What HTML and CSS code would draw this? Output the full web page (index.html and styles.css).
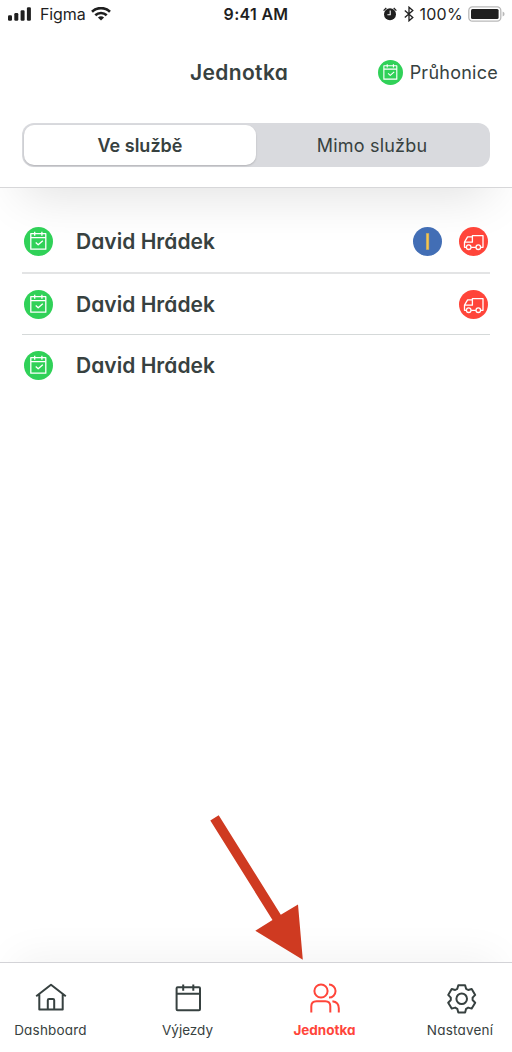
FILE: index.html
```html
<!DOCTYPE html>
<html lang="cs">
<head>
<meta charset="utf-8">
<title>Jednotka</title>
<link rel="stylesheet" href="styles.css">
</head>
<body>
<svg class="symbols" width="0" height="0">
  <symbol id="duty" viewBox="0 0 29 29">
    <circle cx="14.5" cy="14.5" r="14.5" fill="#30d158"/>
    <g fill="none" stroke="#fff" stroke-width="1.3" stroke-linejoin="round">
      <rect x="6.8" y="6.7" width="15" height="15.5"/>
      <path d="M6.8 10.6h15M10.7 4.8v4M17.9 4.8v4M11.7 15.6l2.5 2.2 4.6-4.1"/>
    </g>
  </symbol>
  <symbol id="truck" viewBox="0 0 29 29">
    <circle cx="14.5" cy="14.5" r="14.5" fill="#ff453a"/>
    <g fill="none" stroke="#fff" stroke-width="1.3" stroke-linejoin="round">
      <path d="M7.3 20.3H5.5V15.2L8.6 9.9H13.4V8.6H24v11.7h-2.3M16.9 20.3h-4.8M5.5 15.2h7.9V9.9"/>
      <circle cx="9.7" cy="20.2" r="2.3"/><circle cx="19.3" cy="20.2" r="2.3"/>
    </g>
  </symbol>
</svg>
<div class="screen">
  <header class="header">
    <div class="status">
      <div class="status-left">
        <svg width="24" height="15" viewBox="0 0 24 15" fill="#1f1f1f"><rect x="0" y="8.2" width="4" height="5.5" rx="1.2"/><rect x="6.3" y="6" width="4" height="7.7" rx="1.2"/><rect x="12.6" y="3.2" width="4" height="10.5" rx="1.2"/><rect x="18.9" y=".2" width="4" height="13.5" rx="1.2"/></svg>
        <span class="carrier">Figma</span>
        <svg width="20" height="14" viewBox="0 0 20 14" fill="none" stroke="#1f1f1f" stroke-width="2.6"><path d="M1 4.7a13 13 0 0 1 18 0M4.3 8.3a8.2 8.2 0 0 1 11.4 0"/><path d="M10 13.4l-3.1-2.8a4.6 4.6 0 0 1 6.2 0z" fill="#1f1f1f" stroke="none"/></svg>
      </div>
      <span class="time">9:41 AM</span>
      <div class="status-right">
        <svg width="14" height="14" viewBox="0 0 14 14"><circle cx="7" cy="7.3" r="6" fill="#1f1f1f"/><path d="M.6 3.6L3.3 1M13.4 3.6L10.7 1" stroke="#1f1f1f" stroke-width="1.3"/><path d="M7.2 3.6v4.1H4.4" fill="none" stroke="#fff" stroke-width="1.1"/></svg>
        <svg class="bluetooth" width="10" height="16" viewBox="0 0 10 16" fill="none" stroke="#1f1f1f" stroke-width="1.3"><path d="M.8 4.5l8 7L5 14.8V1.2l3.8 3.3-8 7"/></svg>
        <span class="percent">100%</span>
        <svg width="37" height="16" viewBox="0 0 37 16"><rect x=".8" y=".8" width="32" height="14.4" rx="3.6" fill="#fff" stroke="#b9b9b9" stroke-width="1.3"/><rect x="3" y="3" width="27.6" height="10" rx="1.5" fill="#1f1f1f"/><path d="M34.6 5.5q2 .6 2 2.5t-2 2.5z" fill="#b9b9b9"/></svg>
      </div>
    </div>
    <div class="titlebar">
      <h1 class="title">Jednotka</h1>
      <div class="place">
        <svg width="25" height="25"><use href="#duty"/></svg>
        <span class="place-name">Průhonice</span>
      </div>
    </div>
    <div class="segments">
      <div class="segment selected"><span>Ve službě</span></div>
      <div class="segment"><span class="off-duty">Mimo službu</span></div>
    </div>
  </header>
  <main class="list">
    <div class="row">
      <svg width="29" height="29"><use href="#duty"/></svg>
      <span class="name">David Hrádek</span>
      <div class="badges">
        <svg width="29" height="29" viewBox="0 0 29 29"><circle cx="14.5" cy="14.5" r="14.5" fill="#426eb5"/><rect x="13.2" y="6.3" width="2.7" height="16.4" fill="#f7c64d" stroke="#bba263" stroke-width=".5"/></svg>
        <svg width="29" height="29"><use href="#truck"/></svg>
      </div>
    </div>
    <div class="row thin">
      <svg width="29" height="29"><use href="#duty"/></svg>
      <span class="name">David Hrádek</span>
      <div class="badges"><svg width="29" height="29"><use href="#truck"/></svg></div>
    </div>
    <div class="row last">
      <svg width="29" height="29"><use href="#duty"/></svg>
      <span class="name">David Hrádek</span>
    </div>
  </main>
  <nav class="tabs">
    <div class="tab">
      <svg width="32" height="32" viewBox="0 0 32 32"><path d="M1.2 13.3L16 1.8l14.8 11.5M4.3 11.4V26.6H27.7V11.4M12.8 26.4V17.2q0-1.2 1.2-1.2h4q1.2 0 1.2 1.2v9.2"/></svg>
      <span class="tab-label dashboard">Dashboard</span>
    </div>
    <div class="tab">
      <svg width="32" height="32" viewBox="0 0 32 32"><rect x="4.6" y="4.3" width="23.4" height="23" rx="1"/><path d="M4.6 10.8H28M11.2 1.4v6.4M21.3 1.4v6.4"/></svg>
      <span class="tab-label trips">Výjezdy</span>
    </div>
    <div class="tab active">
      <svg width="32" height="32" viewBox="0 0 32 32"><circle cx="12" cy="8" r="6.6"/><path d="M20 1.5a6.55 6.55 0 0 1 0 13.1M2.3 29.5v-6.2q0-5.1 5.2-5.1h8.8q5 0 5 5.1v6.2M23.4 18.2q6.4.8 6.4 7.1v4.2"/></svg>
      <span class="tab-label unit">Jednotka</span>
    </div>
    <div class="tab">
      <svg width="32" height="32" viewBox="0 0 32 32"><path transform="translate(15.7 15.8)" d="M-3.4-13.6H3.4L4.4-10L6.5-8.8L10-9.8L13.5-3.9L10.9-1.2V1.2L13.5 3.9L10 9.8L6.5 8.8L4.4 10L3.4 13.6H-3.4L-4.4 10L-6.5 8.8L-10 9.8L-13.5 3.9L-10.9 1.2V-1.2L-13.5-3.9L-10-9.8L-6.5-8.8L-4.4-10Z"/><circle cx="15.7" cy="15.8" r="5.3"/></svg>
      <span class="tab-label settings">Nastavení</span>
    </div>
  </nav>
  <svg class="arrow" width="94" height="147" viewBox="210 814 94 147"><path d="M210.3 820.5L218.7 815.2L280.8 914.8L298 904.5L302.8 959.8L255.3 930.7L272.5 920Z" fill="#cf3a21"/></svg>
</div>
</body>
</html>
```
FILE: styles.css
```css
* { box-sizing: border-box; }
body { margin: 0; background: #fff; color: #374140; font-family: Inter, "Noto Sans", sans-serif; font-feature-settings: "cv11"; }
svg { display: block; flex: none; }
.symbols { position: absolute; }
.screen { position: relative; display: flex; flex-direction: column; height: 1052px; overflow: hidden; }
.header { height: 188px; flex: none; background: #fff; border-bottom: 1px solid #d7d7d9; box-shadow: 0 30px 50px -22px rgba(0,0,0,.12); }
.status { display: grid; grid-template-columns: 1fr auto 1fr; align-items: center; height: 28px; padding: 0 8px; color: #1f1f1f; font-size: 16px; font-feature-settings: normal; }
.status span { white-space: nowrap; }
.status-left, .status-right { display: flex; align-items: center; }
.status-right { justify-content: flex-end; }
.carrier { margin: 0 5px 0 8px; letter-spacing: -.1px; }
.time { font-weight: 600; letter-spacing: .3px; }
.bluetooth { margin: 0 5px 0 7px; }
.percent { margin-right: 5px; letter-spacing: .3px; }
.status-right { margin-right: -1px; }
.titlebar { display: grid; grid-template-columns: 190px auto 1fr; align-items: center; height: 89px; padding-right: 14px; }
.title { grid-column: 2; margin: 0; font-size: 21px; line-height: 30px; font-weight: 600; letter-spacing: .35px; }
.place { display: flex; align-items: center; justify-content: flex-end; gap: 7px; }
.place-name { font-size: 18px; letter-spacing: .25px; }
.segments { display: flex; height: 44px; margin: 6px 22px 0; padding: 2px; border-radius: 12px; background: #d9dade; font-size: 18px; }
.segment { display: flex; flex: 1; align-items: center; justify-content: center; border-radius: 10px; }
.selected { background: #fff; font-weight: 600; box-shadow: 0 1px 2px rgba(0,0,0,.18); }
.off-duty { letter-spacing: .2px; }
.list { flex: 1; padding: 23px 22px 0; }
.row { display: flex; align-items: center; height: 63px; padding: 0 2px; border-bottom: 2px solid #e3e4e5; }
.thin { height: 61px; border-bottom: 1px solid #d5d9d9; }
.last { height: 61px; border-bottom: 0; }
.name { margin-left: 23px; font-size: 21px; font-weight: 600; letter-spacing: .03px; }
.badges { display: flex; gap: 17px; margin-left: auto; }
.tabs { display: grid; grid-template-columns: repeat(4, 137px); justify-content: center; height: 90px; background: #fff; border-top: 1px solid #d3d3d7; box-shadow: 0 -20px 40px -14px rgba(0,0,0,.05); }
.tab { display: flex; flex-direction: column; align-items: center; gap: 6px; padding-top: 20px; font-size: 13.5px; line-height: 18px; }
.tab svg { fill: none; stroke: #374140; stroke-width: 2; stroke-linejoin: round; }
.dashboard { letter-spacing: .2px; }
.settings { margin-left: -3px; letter-spacing: .2px; }
.active { color: #ff453a; font-weight: 700; }
.active svg { stroke: #ff453a; }
.arrow { position: absolute; left: 210px; top: 814px; }
```
